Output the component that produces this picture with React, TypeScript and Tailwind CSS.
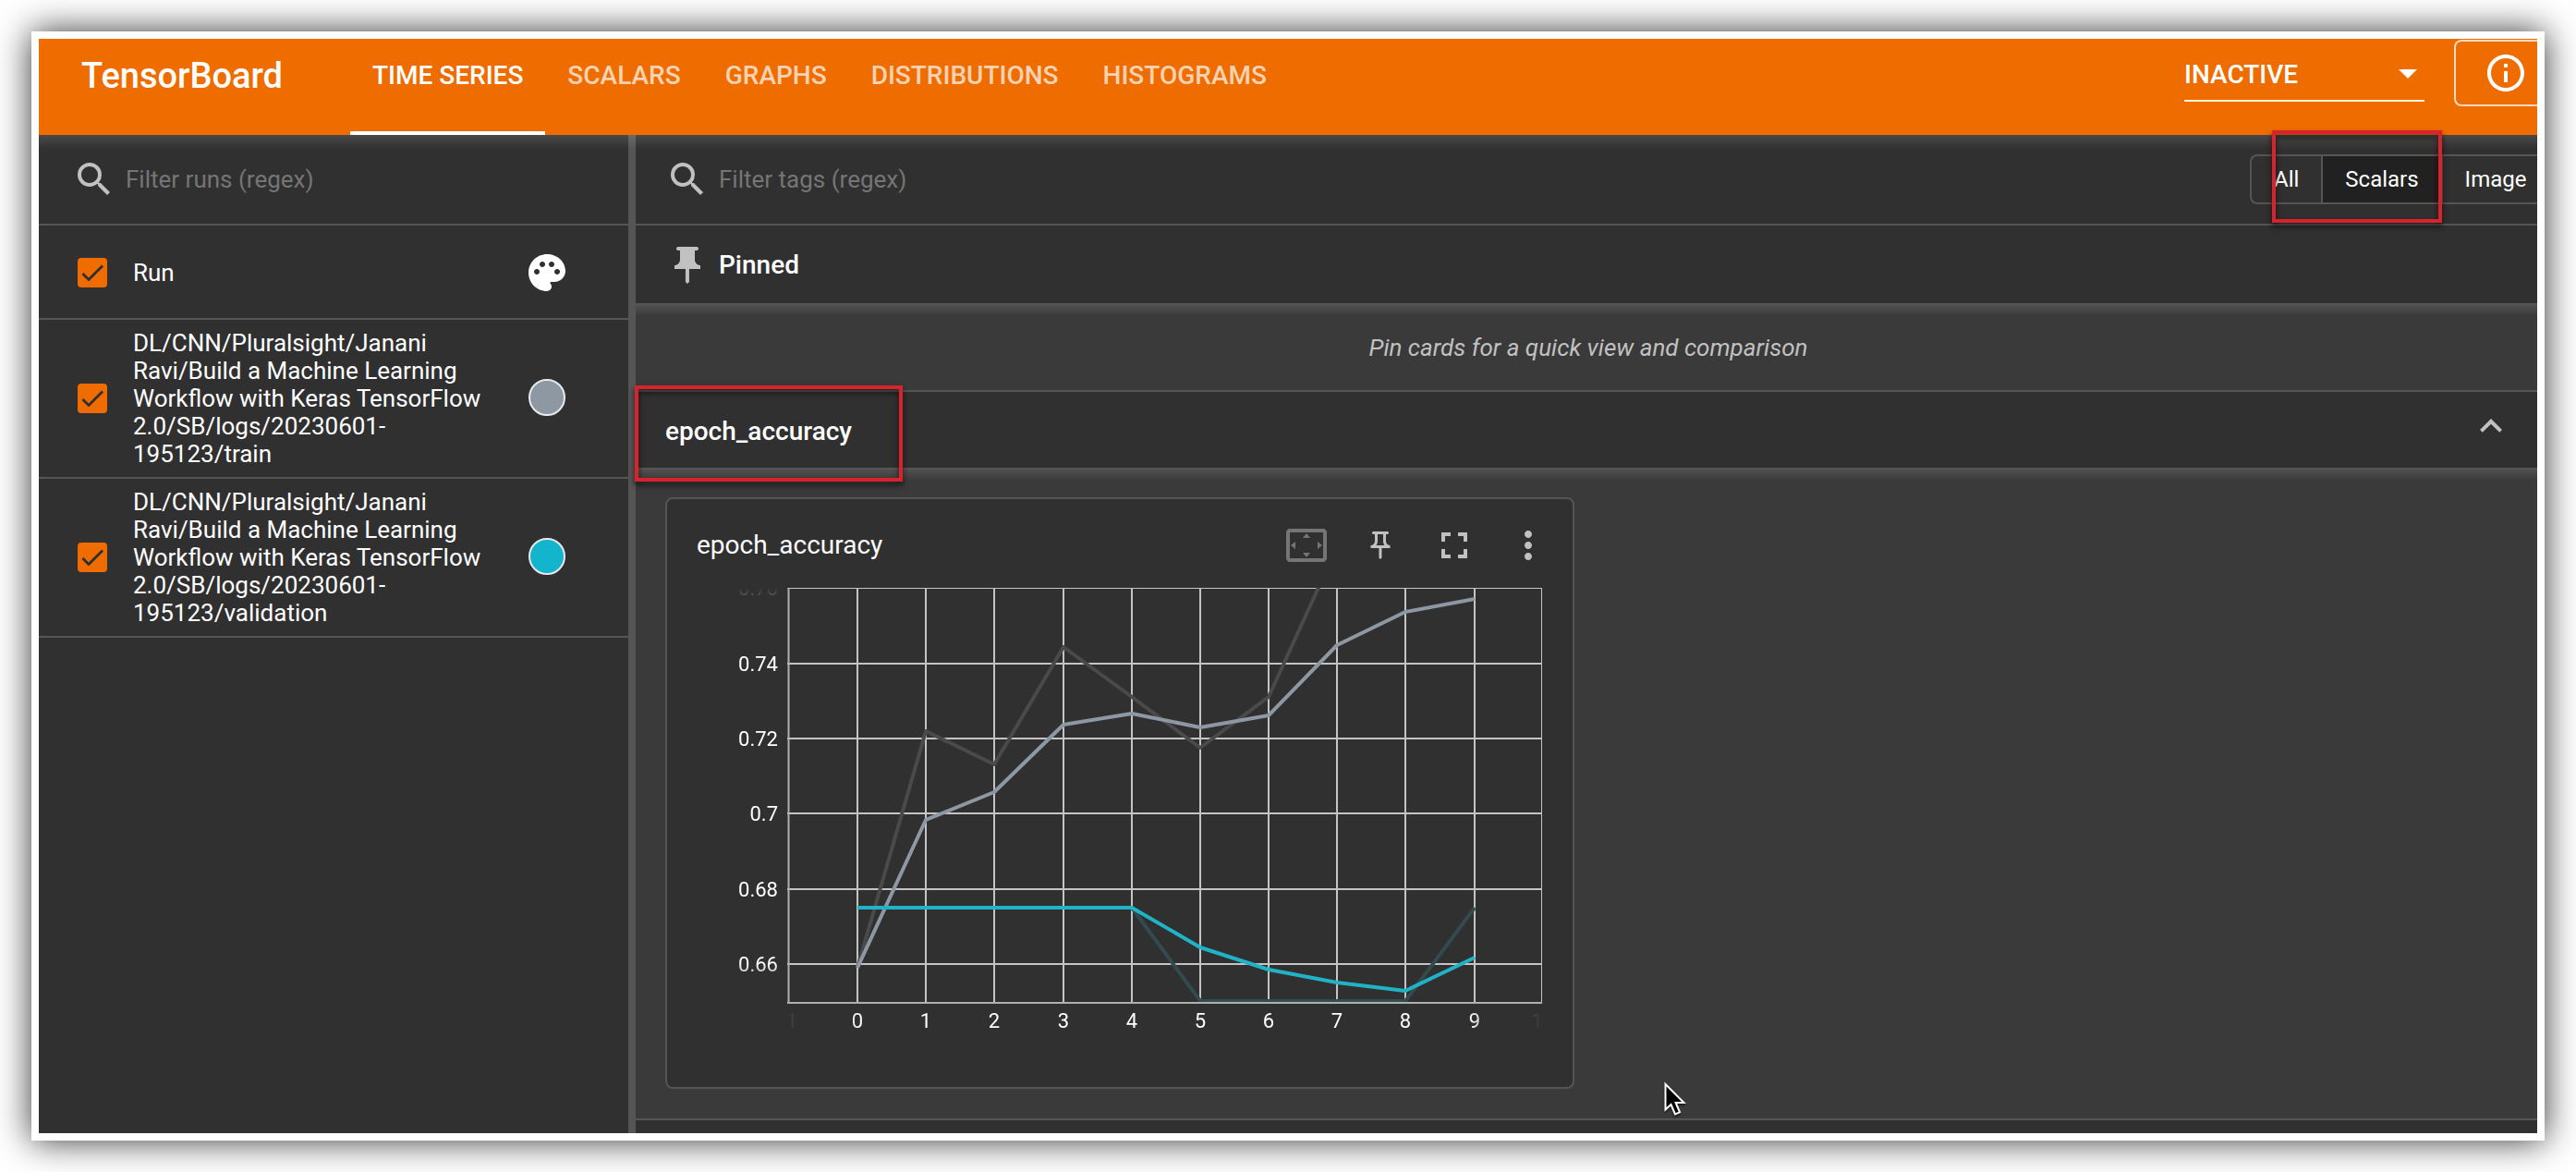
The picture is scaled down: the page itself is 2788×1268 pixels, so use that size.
import React from "react";
import {
  MdSearch,
  MdPalette,
  MdPushPin,
  MdOutlinePushPin,
  MdSettingsOverscan,
  MdFullscreen,
  MdMoreVert,
  MdExpandLess,
  MdArrowDropDown,
  MdInfoOutline,
} from "react-icons/md";

const tabs = ["TIME SERIES", "SCALARS", "GRAPHS", "DISTRIBUTIONS", "HISTOGRAMS"];

const runs = [
  {
    id: "train",
    name: "DL/CNN/Pluralsight/Janani Ravi/Build a Machine Learning Workflow with Keras TensorFlow 2.0/SB/logs/20230601-195123/train",
    swatch: "bg-[#8e98a3]",
  },
  {
    id: "validation",
    name: "DL/CNN/Pluralsight/Janani Ravi/Build a Machine Learning Workflow with Keras TensorFlow 2.0/SB/logs/20230601-195123/validation",
    swatch: "bg-[#12b5cb]",
  },
];

function Checkbox({ id, label }: { id: string; label?: string }) {
  return (
    <span className="grid size-8 shrink-0 place-items-center">
      <input
        id={id}
        type="checkbox"
        defaultChecked
        aria-label={label}
        className="col-start-1 row-start-1 size-8 appearance-none rounded-sm bg-[#f57c00] checked:bg-[#ef6c00]"
      />
      <svg viewBox="0 0 24 24" className="pointer-events-none col-start-1 row-start-1 size-8" aria-hidden="true">
        <path d="M4.1 12.7 9 17.6 20.3 6.3" fill="none" stroke="#303030" strokeWidth="2.1" />
      </svg>
    </span>
  );
}

function Header() {
  return (
    <header className="relative z-10 flex h-[104px] items-stretch bg-[#ef6c00] pl-[46px] text-white">
      <h1 className="w-[249px] shrink-0 pb-6 pt-4 text-[38px] font-medium leading-[48px]">TensorBoard</h1>
      <nav className="flex items-stretch pl-[42px]">
        {tabs.map((tab, i) => (
          <button
            key={tab}
            type="button"
            className={
              i === 0
                ? "border-b-4 border-white px-6 pb-5 text-[28px] font-medium"
                : "border-b-4 border-transparent px-6 pb-5 text-[28px] font-medium text-[#fbd3b2]"
            }
          >
            {tab}
          </button>
        ))}
      </nav>
      <div className="ml-auto flex items-start gap-8">
        <div className="mt-2 grid w-[260px] items-center border-b-2 border-[#fff3d6]">
          <select
            aria-label="Inactive dashboards"
            className="col-start-1 row-start-1 h-[58px] appearance-none bg-transparent pt-1 text-[28px] font-medium"
          >
            <option>INACTIVE</option>
          </select>
          <MdArrowDropDown className="pointer-events-none col-start-1 row-start-1 size-12 translate-x-1.5 justify-self-end" />
        </div>
        <button
          type="button"
          aria-label="Information"
          className="mt-px h-[72px] w-[90px] rounded-l-lg border-2 border-r-0 border-[#fbd9bd] pl-[30px]"
        >
          <MdInfoOutline className="size-12" />
        </button>
      </div>
    </header>
  );
}

function FilterInput({ id, label }: { id: string; label: string }) {
  return (
    <label htmlFor={id} className="flex min-w-0 flex-1 items-center gap-2.5">
      <MdSearch className="size-12 shrink-0 text-[#c1c1c1]" />
      <input
        id={id}
        type="text"
        placeholder={label}
        aria-label={label}
        className="min-w-0 flex-1 bg-transparent text-[26px] outline-none placeholder:text-[#757575]"
      />
    </label>
  );
}

function Sidebar() {
  return (
    <aside className="w-[646px] shrink-0 border-r-8 border-[#555]">
      <div className="flex h-[98px] items-center border-b-2 border-[#555] pl-9 pr-6">
        <FilterInput id="filter-runs" label="Filter runs (regex)" />
      </div>
      <div className="flex h-[102px] items-center border-b-2 border-[#555] pl-[42px] pr-16 pt-0.5">
        <Checkbox id="run-all" />
        <label htmlFor="run-all" className="ml-7 flex-1 text-[26px] leading-[30px]">
          Run
        </label>
        <button type="button" aria-label="Color runs by">
          <MdPalette className="size-12" />
        </button>
      </div>
      {runs.map((run) => (
        <div key={run.id} className="flex items-center border-b-2 border-[#555] py-2.5 pl-[42px] pr-[68px]">
          <Checkbox id={run.id} />
          <label htmlFor={run.id} className="ml-7 w-[384px] text-[26px] leading-[30px]">
            {run.name}
          </label>
          <button
            type="button"
            aria-label={"Color of " + run.id}
            className={"mb-0.5 ml-auto size-10 rounded-full border-2 border-[#e8eaed] " + run.swatch}
          />
        </div>
      ))}
    </aside>
  );
}

const xs = [76, 150, 224, 299, 373, 447, 521, 595, 669, 744];
const yTicks = [
  { y: 0, label: "0.76" },
  { y: 82, label: "0.74" },
  { y: 163, label: "0.72" },
  { y: 244, label: "0.7" },
  { y: 326, label: "0.68" },
  { y: 407, label: "0.66" },
];
const toPoints = (ys: number[], from = 0) => ys.map((y, i) => xs[i + from] + "," + y).join(" ");

const trainRaw = toPoints([411, 155, 191, 64, 118, 173, 118, -44]);
const trainSmooth = toPoints([411, 251, 221, 148, 136, 151, 138, 62, 26, 12]);
const validRaw = toPoints([346, 447, 447, 447, 447, 346], 4);
const validSmooth = toPoints([346, 346, 346, 346, 346, 389, 413, 427, 436, 400]);

function Chart() {
  return (
    <svg
      viewBox="0 0 916 500"
      className="block w-full"
      role="img"
      aria-label="epoch_accuracy by epoch"
      fontFamily="Roboto, sans-serif"
      fontSize="22"
      fill="#fff"
    >
      <defs>
        <linearGradient id="fadeY" x1="0" y1="0" x2="0" y2="1">
          <stop offset="0" stopColor="#fff" stopOpacity="0" />
          <stop offset="0.1" stopColor="#fff" />
          <stop offset="0.9" stopColor="#fff" />
          <stop offset="1" stopColor="#fff" stopOpacity="0" />
        </linearGradient>
        <linearGradient id="fadeX" x1="0" y1="0" x2="1" y2="0">
          <stop offset="0" stopColor="#fff" stopOpacity="0" />
          <stop offset="0.1" stopColor="#fff" />
          <stop offset="0.9" stopColor="#fff" />
          <stop offset="1" stopColor="#fff" stopOpacity="0" />
        </linearGradient>
        <mask id="maskY" maskUnits="userSpaceOnUse" x="0" y="0" width="98" height="450">
          <rect width="98" height="450" fill="url(#fadeY)" />
        </mask>
        <mask id="maskX" maskUnits="userSpaceOnUse" x="98" y="450" width="817" height="50">
          <rect x="98" y="450" width="817" height="50" fill="url(#fadeX)" />
        </mask>
        <clipPath id="plot">
          <rect x="0" y="0" width="817" height="448" />
        </clipPath>
      </defs>
      <g mask="url(#maskY)" textAnchor="end">
        {yTicks.map((t) => (
          <text key={t.label} x="88" y={t.y + 8}>
            {t.label}
          </text>
        ))}
      </g>
      <g mask="url(#maskX)" textAnchor="middle">
        <text x="100" y="476">-1</text>
        {xs.map((x, i) => (
          <text key={i} x={x + 98} y="476">
            {i}
          </text>
        ))}
        <text x="916" y="476">10</text>
      </g>
      <g transform="translate(98 0)">
        <g stroke="#c4c4c4" strokeWidth="2">
          {xs.map((x) => (
            <line key={x} x1={x} x2={x} y1="0" y2="448" />
          ))}
          {yTicks.slice(1).map((t) => (
            <line key={t.y} x1="0" x2="817" y1={t.y} y2={t.y} />
          ))}
          <path d="M0 .5H817M816.5 0V449" strokeWidth="1" fill="none" />
          <path d="M1.5 0V450M0 449H817" stroke="#b0b0b0" fill="none" />
        </g>
        <g clipPath="url(#plot)" fill="none" strokeWidth="4" strokeLinejoin="round">
          <polyline points={trainRaw} stroke="#4a4a4c" />
          <polyline points={validRaw} stroke="#334b4e" />
          <polyline points={trainSmooth} stroke="#8e98a3" />
          <polyline points={validSmooth} stroke="#20b3c7" />
        </g>
      </g>
    </svg>
  );
}

function ScalarCard() {
  return (
    <article className="h-[640px] w-[984px] rounded-lg border-2 border-[#555] bg-[#303030] pl-8 pr-2">
      <div className="flex h-24 items-center pt-1">
        <h3 className="flex-1 text-[28px]">epoch_accuracy</h3>
        <div className="flex items-center text-[#c1c1c1]">
          <button type="button" disabled aria-label="Fit domain to data" className="flex w-20 justify-center text-[#757575]">
            <MdSettingsOverscan className="size-12" />
          </button>
          <button type="button" aria-label="Pin card" className="flex w-20 justify-center">
            <MdOutlinePushPin className="size-9" />
          </button>
          <button type="button" aria-label="Toggle full size" className="flex w-20 justify-center">
            <MdFullscreen className="size-12" />
          </button>
          <button type="button" aria-label="More options" className="flex w-20 justify-center">
            <MdMoreVert className="size-12" />
          </button>
        </div>
      </div>
      <div className="pr-6">
        <Chart />
      </div>
    </article>
  );
}

function Highlight({ className }: { className: string }) {
  return (
    <span
      aria-hidden="true"
      className={
        "pointer-events-none absolute z-20 border-4 border-[#d8232c] drop-shadow-[0_4px_3px_rgba(0,0,0,0.7)] " + className
      }
    />
  );
}

function Main() {
  return (
    <main className="flex min-w-0 flex-1 flex-col bg-[#3a3a3a]">
      <div className="flex h-[98px] items-center border-b-2 border-[#555] bg-[#303030] pl-8">
        <FilterInput id="filter-tags" label="Filter tags (regex)" />
        <div className="relative h-[54px] w-[311px] shrink-0">
          <div className="flex h-full overflow-hidden rounded-l-lg border-2 border-r-0 border-[#555] text-[24px]">
            <button type="button" className="border-r-2 border-[#555] px-6">
              All
            </button>
            <button type="button" className="border-r-2 border-[#555] bg-[#212121] px-6">
              Scalars
            </button>
            <button type="button" className="px-6">
              Image
            </button>
          </div>
          <Highlight className="-top-[26px] left-6 h-[100px] w-[184px]" />
        </div>
      </div>
      <section>
        <div className="flex h-[86px] items-center gap-2.5 border-b-2 border-[#555] bg-[#303030] pl-8 pt-0.5">
          <MdPushPin className="size-12 text-[#c1c1c1]" />
          <h2 className="text-[28px] font-medium">Pinned</h2>
        </div>
        <p className="flex h-[92px] items-center justify-center bg-linear-to-b from-[#505050] to-[#3a3a3a] to-[12px] pl-1 text-[26px] italic text-[#c1c1c1]">
          Pin cards for a quick view and comparison
        </p>
      </section>
      <section>
        <div className="relative flex h-[86px] items-center justify-between border-y-2 border-[#555] bg-[#303030] pl-8 pr-[26px] pt-1">
          <h2 className="text-[28px] font-medium">epoch_accuracy</h2>
          <button type="button" aria-label="Collapse group" className="mb-3">
            <MdExpandLess className="size-12 text-[#c1c1c1]" />
          </button>
          <Highlight className="-left-px -top-[7px] h-[104px] w-[290px]" />
        </div>
        <div className="bg-linear-to-b from-[#505050] to-[#3a3a3a] to-[12px] px-8 pb-8 pt-[30px]">
          <ScalarCard />
        </div>
      </section>
      <div className="min-h-4 flex-1 border-t-2 border-[#555] bg-[#303030]" />
    </main>
  );
}

export default function App() {
  return (
    <div className="relative flex min-h-screen flex-col bg-white p-[34px] font-[Roboto,sans-serif] text-white">
      <div className="flex flex-1 flex-col border-8 border-white shadow-[0_0_36px_rgba(0,0,0,0.8)]">
        <Header />
        <div className="relative flex flex-1 bg-[#303030]">
          <Sidebar />
          <Main />
          <div className="pointer-events-none absolute inset-x-0 top-0 h-4 bg-linear-to-b from-white/12 to-transparent" />
        </div>
      </div>
      <svg
        viewBox="0 0 24 38"
        className="pointer-events-none absolute left-[1801px] top-[1170px] w-6 drop-shadow-[0_2px_1px_rgba(0,0,0,0.5)]"
        aria-hidden="true"
      >
        <path d="M1.5 3v27.5l6-5.500 4.500 10.500 5-2.200L12.600 23h8.900z" fill="#000" stroke="#fff" strokeWidth="2" />
      </svg>
    </div>
  );
}
